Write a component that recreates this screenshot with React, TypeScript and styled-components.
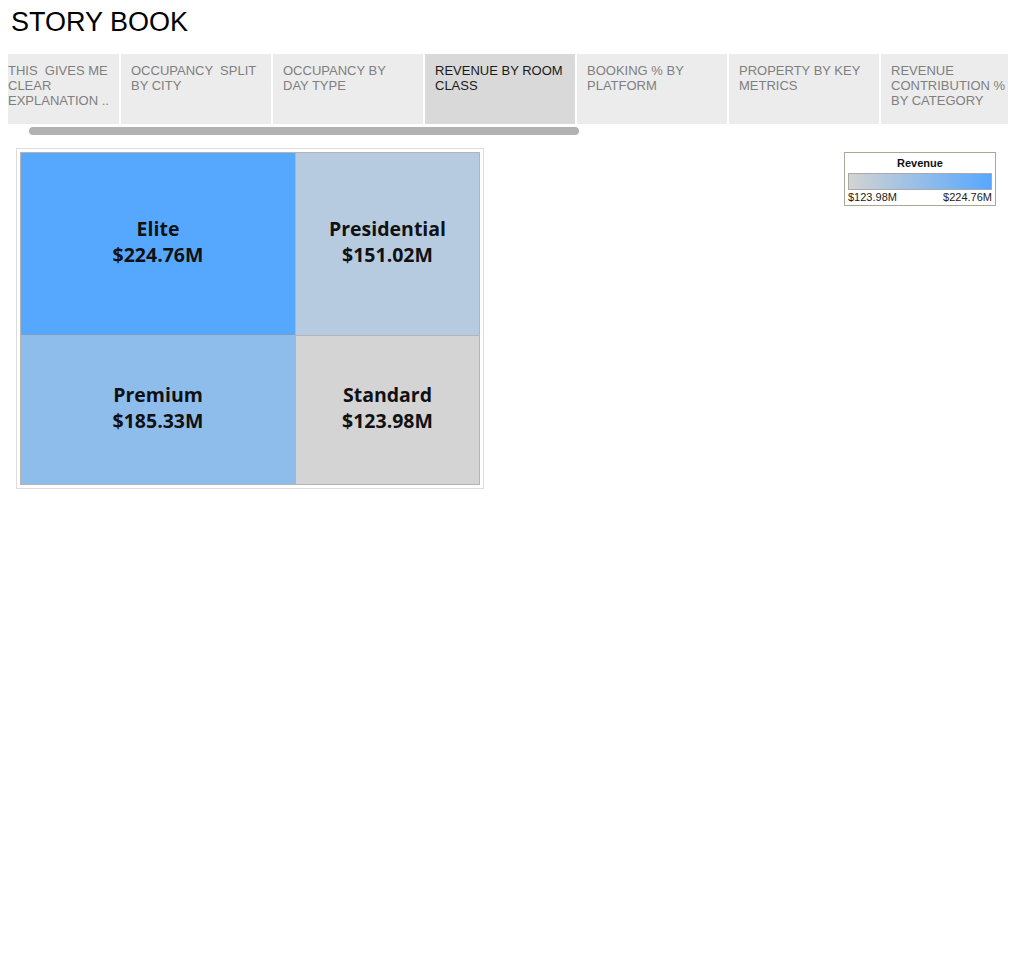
import React from "react";
import styled, { createGlobalStyle } from "styled-components";

const GlobalStyle = createGlobalStyle`
  body {
    margin: 0;
    background: #ffffff;
    font-family: "Liberation Sans", Arial, sans-serif;
  }
`;

interface Tab {
  label: string;
  width: number;
  active?: boolean;
  flush?: boolean;
}

const tabs: Tab[] = [
  { label: "THIS  GIVES ME CLEAR EXPLANATION ..", width: 111, flush: true },
  { label: "OCCUPANCY  SPLIT BY CITY", width: 150 },
  { label: "OCCUPANCY BY DAY TYPE", width: 150 },
  { label: "REVENUE BY ROOM CLASS", width: 150, active: true },
  { label: "BOOKING % BY PLATFORM", width: 150 },
  { label: "PROPERTY BY KEY METRICS", width: 150 },
  { label: "REVENUE CONTRIBUTION % BY CATEGORY", width: 127 },
];

const cells = [
  { name: "Elite", value: "$224.76M", color: "#56a8fe" },
  { name: "Presidential", value: "$151.02M", color: "#b7cbe0" },
  { name: "Premium", value: "$185.33M", color: "#8ebdec" },
  { name: "Standard", value: "$123.98M", color: "#d4d4d4" },
];

export default function App() {
  return (
    <>
      <GlobalStyle />
      <Page>
        <Title>STORY BOOK</Title>
        <TabBar>
          {tabs.map((t) => (
            <TabItem key={t.label} $width={t.width} $active={t.active} $flush={t.flush}>
              <TabLabel>{t.label}</TabLabel>
            </TabItem>
          ))}
        </TabBar>
        <ScrollTrack>
          <ScrollThumb />
        </ScrollTrack>
        <Content>
          <ChartFrame>
            <Treemap>
              {cells.map((c) => (
                <Cell key={c.name} $color={c.color}>
                  <span>{c.name}</span>
                  <span>{c.value}</span>
                </Cell>
              ))}
            </Treemap>
          </ChartFrame>
          <Legend>
            <LegendTitle>Revenue</LegendTitle>
            <LegendBar />
            <LegendLabels>
              <span>$123.98M</span>
              <span>$224.76M</span>
            </LegendLabels>
          </Legend>
        </Content>
      </Page>
    </>
  );
}

const Page = styled.div`
  width: 1015px;
  display: flex;
  flex-direction: column;
`;

const Title = styled.h1`
  margin: 7px 0 0 11px;
  font-size: 27px;
  line-height: 31px;
  font-weight: 400;
  color: #000;
`;

const TabBar = styled.div`
  display: flex;
  gap: 2px;
  margin: 16px 0 0 8px;
  height: 70px;
`;

const TabItem = styled.div<{ $width: number; $active?: boolean; $flush?: boolean }>`
  width: ${(p) => p.$width}px;
  flex: none;
  box-sizing: border-box;
  padding: 9px 0 0 ${(p) => (p.$flush ? 0 : 10)}px;
  background: ${(p) => (p.$active ? "#d9d9d9" : "#ececec")};
  color: ${(p) => (p.$active ? "#1a1a1a" : "#7f7f7f")};
  font-size: 13px;
  line-height: 15px;
  overflow: hidden;
`;

const TabLabel = styled.div`
  max-width: 130px;
  white-space: pre-wrap;
`;

const ScrollTrack = styled.div`
  margin: 3px 0 0 29px;
  width: 550px;
  height: 8px;
`;

const ScrollThumb = styled.div`
  height: 100%;
  border-radius: 4px;
  background: #b2b2b2;
`;

const Content = styled.div`
  display: flex;
  justify-content: space-between;
  align-items: flex-start;
  margin-top: 13px;
  padding: 0 19px 0 16px;
`;

const ChartFrame = styled.div`
  border: 1px solid #dcdcdc;
  padding: 3px;
`;

const Treemap = styled.div`
  display: grid;
  grid-template-columns: 274px 183px;
  grid-template-rows: 182px 148px;
  gap: 1px;
  background: #b4b4b4;
  border: 1px solid #b4b4b4;
`;

const Cell = styled.div<{ $color: string }>`
  background: ${(p) => p.$color};
  display: flex;
  flex-direction: column;
  align-items: center;
  justify-content: center;
  padding-bottom: 4px;
  font-family: "Open Sans", "Noto Sans", sans-serif;
  font-weight: 700;
  font-size: 19.5px;
  line-height: 26px;
  color: #111;
`;

const Legend = styled.div`
  margin-top: 4px;
  width: 152px;
  box-sizing: border-box;
  border: 1px solid #aaa797;
  padding: 3px 3px 1px;
  display: flex;
  flex-direction: column;
`;

const LegendTitle = styled.div`
  text-align: center;
  font-size: 11px;
  font-weight: 700;
  line-height: 15px;
  color: #111;
`;

const LegendBar = styled.div`
  margin-top: 2px;
  height: 15px;
  border: 1px solid #aaa;
  background: linear-gradient(to right, #d3d3d3, #56a8fe);
`;

const LegendLabels = styled.div`
  display: flex;
  justify-content: space-between;
  font-size: 11px;
  line-height: 14px;
  color: #222;
`;
